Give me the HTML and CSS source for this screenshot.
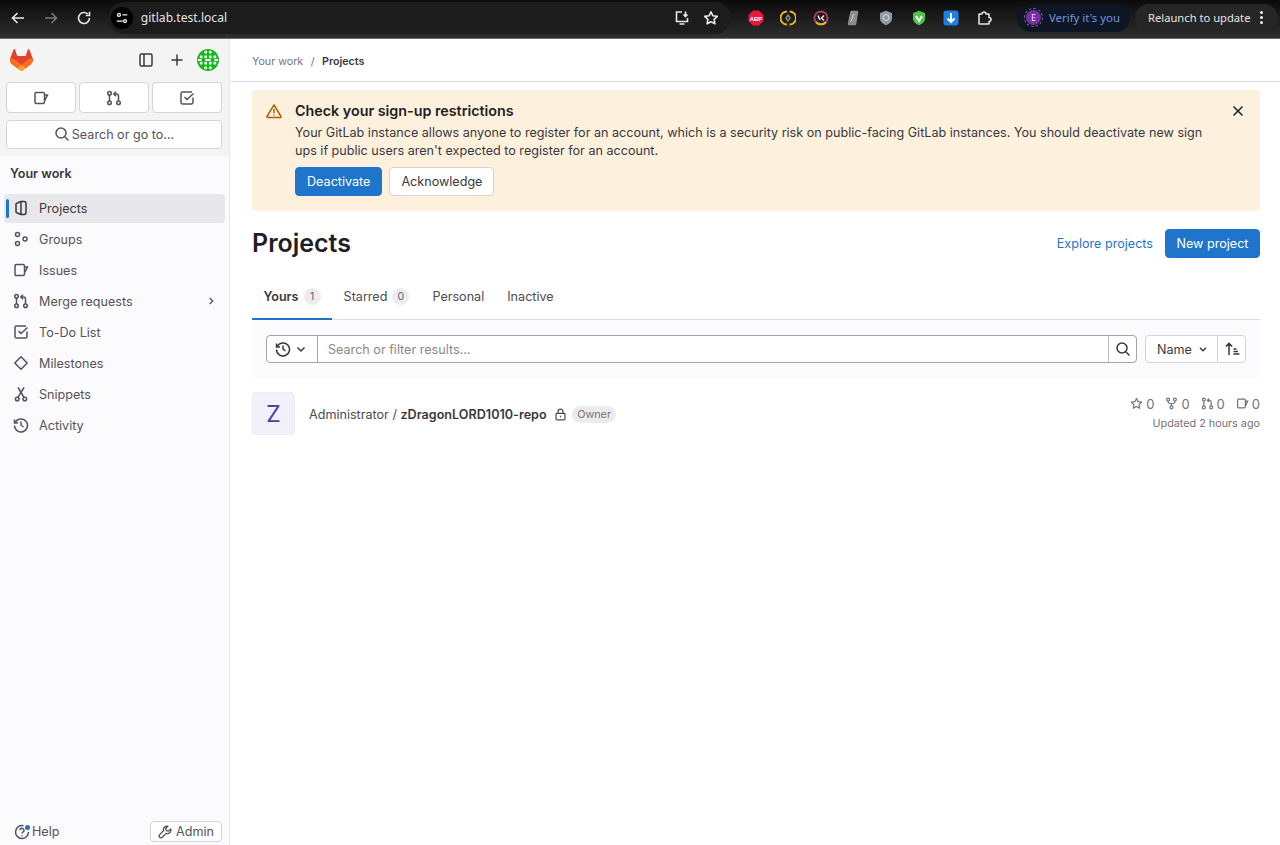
FILE: index.html
```html
<!DOCTYPE html>
<html lang="en">
<head>
  <meta charset="UTF-8" />
  <meta name="viewport" content="width=device-width, initial-scale=1.0"/>
  <title>Projects · GitLab</title>
  <link rel="stylesheet" href="styles.css">
</head>
<body>
<svg class="sprite" width="0" height="0">
  <defs>
    <symbol id="i-project" viewBox="0 0 16 16"><path d="M8 1.500 3.700 3.200a1 1 0 0 0-.7 1v7.600a1 1 0 0 0 .7 1L8 14.500h3a2 2 0 0 0 2-2v-9a2 2 0 0 0-2-2H8zM8 1.500v13"/></symbol>
    <symbol id="i-groups" viewBox="0 0 16 16"><circle cx="4.500" cy="3.500" r="2"/><circle cx="4.500" cy="12.500" r="2"/><circle cx="12" cy="8" r="2"/></symbol>
    <symbol id="i-issues" viewBox="0 0 16 16"><path d="M3.200 2.500H10A1.500 1.500 0 0 1 11.500 4v8a1.500 1.500 0 0 1-1.500 1.500H3.200A1.200 1.200 0 0 1 2 12.300V3.700A1.200 1.200 0 0 1 3.200 2.500zM11.500 5H14.500L11.500 11"/></symbol>
    <symbol id="i-merge" viewBox="0 0 16 16"><circle cx="3.500" cy="3.200" r="1.800"/><circle cx="3.500" cy="12.800" r="1.800"/><circle cx="12.500" cy="12.800" r="1.800"/><path d="M3.500 5v6M12.500 11V6a2 2 0 0 0-2-2H8M10 1.800 7.800 4 10 6.200"/></symbol>
    <symbol id="i-todo" viewBox="0 0 16 16"><path d="M14 7.500v5a1.500 1.500 0 0 1-1.500 1.500h-9A1.500 1.500 0 0 1 2 12.500v-9A1.500 1.500 0 0 1 3.500 2H13M5.500 7l2.500 2.500L14.500 3.500"/></symbol>
    <symbol id="i-milestone" viewBox="0 0 16 16"><path d="M8 1.800 14.200 8 8 14.200 1.800 8z" stroke-linejoin="round"/></symbol>
    <symbol id="i-snippet" viewBox="0 0 16 16"><circle cx="4.200" cy="13" r="1.800"/><circle cx="11.800" cy="13" r="1.800"/><path d="M5 11.400 11 1.500M11 11.400 5 1.500"/></symbol>
    <symbol id="i-history" viewBox="0 0 16 16"><path d="M2.200 5.500A6.500 6.500 0 1 1 1.500 8.500M1.500 2.500v3.500H5M8 4.500V8l2.500 2"/></symbol>
    <symbol id="i-search" viewBox="0 0 16 16"><circle cx="7" cy="7" r="5"/><path d="m10.800 10.800 3.700 3.700"/></symbol>
    <symbol id="i-chevron-down" viewBox="0 0 16 16"><path d="m4.500 6.500 3.500 3.500 3.500-3.500"/></symbol>
    <symbol id="i-chevron-right" viewBox="0 0 16 16"><path d="m6.500 4.500 3.500 3.500-3.500 3.500"/></symbol>
    <symbol id="i-sidebar" viewBox="0 0 16 16"><rect x="2" y="2" width="12" height="12" rx="1.500"/><path d="M6 2v12"/></symbol>
    <symbol id="i-plus" viewBox="0 0 16 16"><path d="M8 2.500v11M2.500 8h11"/></symbol>
    <symbol id="i-warning" viewBox="0 0 16 16"><path d="M8 1.800 1 13.500a.6.6 0 0 0 .5.9h13a.6.6 0 0 0 .5-.9zM8 6v4.200M8 11.600v1" stroke-linejoin="round"/></symbol>
    <symbol id="i-close" viewBox="0 0 16 16"><path d="m3.500 3.500 9 9M12.500 3.500l-9 9"/></symbol>
    <symbol id="i-sort" viewBox="0 0 16 16"><path d="M5 14V2.500M1.800 5.500 5 2.300l3.200 3.200M9.500 8h3M9.500 10.500h4.500M9.500 13h6"/></symbol>
    <symbol id="i-star" viewBox="0 0 16 16"><path d="m8 1.800 1.900 4 4.400.600-3.200 3 .8 4.400L8 11.700l-3.900 2.100.8-4.400-3.200-3 4.400-.600z" stroke-linejoin="round"/></symbol>
    <symbol id="i-fork" viewBox="0 0 16 16"><circle cx="3.800" cy="3.200" r="1.800"/><circle cx="12.200" cy="3.200" r="1.800"/><circle cx="8" cy="12.800" r="1.800"/><path d="M3.800 5v.5a2.500 2.500 0 0 0 2.500 2.500h3.400a2.500 2.500 0 0 0 2.500-2.500V5M8 8v3"/></symbol>
    <symbol id="i-lock" viewBox="0 0 16 16"><rect x="2.500" y="6.500" width="11" height="8" rx="1"/><path d="M5 6.500V4.500a3 3 0 0 1 6 0v2M8 9.500v2"/></symbol>
    <symbol id="i-wrench" viewBox="0 0 16 16"><path d="M14.500 4.500 11.800 7 9.300 6.500 8.800 4 11.300 1.500a4 4 0 0 0-5 5L1.800 11a2.200 2.200 0 0 0 3.100 3.100L9.400 9.600a4 4 0 0 0 5.100-5.100z" stroke-linejoin="round"/></symbol>
    <symbol id="i-help" viewBox="0 0 16 16"><path d="M9.500 1.700A6.500 6.500 0 1 0 14.500 8M6 6.200a2 2 0 1 1 3 1.800c-.6.400-1 .8-1 1.500M8 11.300v1"/></symbol>
    <symbol id="i-tanuki" viewBox="0 0 25 24">
      <path fill="#E24329" stroke="none" d="m24.507 9.500-.034-.09L21.082.562a.896.896 0 0 0-1.694.091l-2.290 7.010H7.825L5.535.653a.898.898 0 0 0-1.694-.090L.451 9.411.416 9.500a6.297 6.297 0 0 0 2.090 7.278l.012.010.030.022 5.160 3.867 2.560 1.935 1.554 1.176a1.051 1.051 0 0 0 1.268 0l1.555-1.176 2.560-1.935 5.197-3.890.014-.010A6.297 6.297 0 0 0 24.507 9.500Z"/>
      <path fill="#FC6D26" stroke="none" d="m24.507 9.500-.034-.09a11.440 11.440 0 0 0-4.560 2.051l-7.447 5.632 4.742 3.584 5.197-3.890.014-.010A6.297 6.297 0 0 0 24.507 9.500Z"/>
      <path fill="#FCA326" stroke="none" d="m7.707 20.677 2.560 1.935 1.555 1.176a1.051 1.051 0 0 0 1.268 0l1.555-1.176 2.560-1.935-4.743-3.584-4.755 3.584Z"/>
      <path fill="#FC6D26" stroke="none" d="M5.010 11.461a11.430 11.430 0 0 0-4.560-2.050L.416 9.500a6.297 6.297 0 0 0 2.090 7.278l.012.010.030.022 5.160 3.867 4.745-3.584-7.444-5.632Z"/>
    </symbol>
  </defs>
</svg>

<!-- browser chrome -->
<header class="chrome">
  <div class="chrome-nav">
    <svg class="chrome-icon" viewBox="0 0 16 16"><path d="M14 8H2.500M7.500 3 2.500 8l5 5"/></svg>
    <svg class="chrome-icon dim" viewBox="0 0 16 16"><path d="M2 8h11.500M8.500 3l5 5-5 5"/></svg>
    <svg class="chrome-icon" viewBox="0 0 16 16"><path d="M13.500 8A5.500 5.500 0 1 1 11.800 4M13.500 1.800V5.500H9.800"/></svg>
  </div>
  <div class="urlbar">
    <span class="site-info">
      <svg viewBox="0 0 16 16"><circle cx="4.500" cy="4.500" r="1.700"/><path d="M8.500 4.500H14M2 11.500h7"/><circle cx="11.500" cy="11.500" r="1.700"/></svg>
    </span>
    <span class="url">gitlab.test.local</span>
    <span class="url-actions">
      <svg class="chrome-icon" viewBox="0 0 16 16"><path d="M8 2H2.500v9.500h11V8M5.500 14h5M11.500 1.500v4.500M9.500 4.500l2 2 2-2"/></svg>
      <svg class="chrome-icon" viewBox="0 0 16 16"><use href="#i-star"/></svg>
    </span>
  </div>
  <div class="extensions">
    <svg viewBox="0 0 16 16"><path fill="#e8193c" d="M5 .5h6L15.500 5v6L11 15.500H5L.5 11V5z"/><text x="8" y="10.500" class="abp">ABP</text></svg>
    <svg viewBox="0 0 16 16" fill="none"><path stroke="#e9b020" stroke-width="2" d="M7 1.500a6.500 6.500 0 0 0 0 13M9.500 14.500a6.500 6.500 0 0 0 0-13"/><path stroke="#888" stroke-width="1.500" d="M8 5l2 3-2 3-2-3z"/></svg>
    <svg viewBox="0 0 16 16" fill="none"><circle cx="8" cy="8" r="6.500" stroke="#b23a6a" stroke-width="2"/><path stroke="#e8b030" stroke-width="2" d="M3 12a6.500 6.500 0 0 0 10 0"/><path stroke="#e8e8e8" stroke-width="1.500" d="M5 5.500 7 10M11 5.500 8.500 8l2.500 2.500"/></svg>
    <svg viewBox="0 0 16 16"><path fill="#8c8c8c" d="M6.500 2h5.500L10 14H4z" stroke="#8c8c8c" stroke-linejoin="round" stroke-width="2.500"/><path stroke="#e0e0e0" fill="none" d="M9.500 4.500c-3 0-1 3-2 4s-1 2-1.500 3"/></svg>
    <svg viewBox="0 0 16 16"><path fill="#8f98a3" d="M8 .8 14 3v5.500c0 3.200-2.800 5.500-6 6.700-3.200-1.200-6-3.500-6-6.700V3z"/><circle cx="8" cy="7.500" r="3" fill="none" stroke="#d8dde2"/></svg>
    <svg viewBox="0 0 16 16"><path fill="#4fc24a" d="M8 .8 14 3v5.500c0 3.200-2.800 5.500-6 6.700-3.200-1.200-6-3.500-6-6.700V3z"/><path fill="none" stroke="#fff" stroke-width="2" d="m5 6 3 5 3-5"/></svg>
    <svg viewBox="0 0 16 16"><rect x=".5" y=".5" width="15" height="15" rx="3" fill="#1c7fe8"/><path fill="none" stroke="#fff" stroke-width="2" d="M8 3v9M4.500 8.500 8 12l3.500-3.500"/></svg>
    <svg viewBox="0 0 16 16" fill="none"><path stroke="#e8e8e8" stroke-width="1.500" stroke-linejoin="round" d="M3 4h3a2 2 0 0 1 4 0h3v3.500a2 2 0 0 1 0 4V14H3z"/></svg>
  </div>
  <div class="verify">
    <span class="verify-badge">E</span>
    <span>Verify it's you</span>
  </div>
  <div class="relaunch">
    <span>Relaunch to update</span>
    <span class="dots"><i></i><i></i><i></i></span>
  </div>
</header>

<div class="app">
  <aside class="sidebar">
    <div class="user-bar">
      <div class="user-top">
        <svg class="tanuki"><use href="#i-tanuki"/></svg>
        <span class="user-actions">
          <svg class="icon"><use href="#i-sidebar"/></svg>
          <svg class="icon"><use href="#i-plus"/></svg>
          <svg class="avatar" viewBox="0 0 24 24">
            <circle cx="12" cy="12" r="12" fill="#17b51f"/>
            <path fill="#e8f7e8" d="M8 2h3v3H8zM13 2h3v3h-3zM8 7h3v3H8zM13 7h3v3h-3zM8 14h3v3H8zM13 14h3v3h-3zM8 19h3v3H8zM13 19h3v3h-3zM3 7h3v3H3zM18 7h3v3h-3zM3 14h3v3H3zM18 14h3v3h-3zM1 11h4v2H1zM19 11h4v2h-4zM9 11h6v2H9z"/>
          </svg>
        </span>
      </div>
      <div class="counters">
        <button class="btn"><svg class="icon"><use href="#i-issues"/></svg></button>
        <button class="btn"><svg class="icon"><use href="#i-merge"/></svg></button>
        <button class="btn"><svg class="icon"><use href="#i-todo"/></svg></button>
      </div>
      <button class="btn search-btn"><svg class="icon"><use href="#i-search"/></svg>Search or go to...</button>
    </div>

    <div class="nav-title">Your work</div>
    <nav class="nav">
      <a class="nav-item active"><svg class="icon"><use href="#i-project"/></svg>Projects</a>
      <a class="nav-item"><svg class="icon"><use href="#i-groups"/></svg>Groups</a>
      <a class="nav-item"><svg class="icon"><use href="#i-issues"/></svg>Issues</a>
      <a class="nav-item"><svg class="icon"><use href="#i-merge"/></svg>Merge requests<svg class="icon nav-chevron"><use href="#i-chevron-right"/></svg></a>
      <a class="nav-item"><svg class="icon"><use href="#i-todo"/></svg>To-Do List</a>
      <a class="nav-item"><svg class="icon"><use href="#i-milestone"/></svg>Milestones</a>
      <a class="nav-item"><svg class="icon"><use href="#i-snippet"/></svg>Snippets</a>
      <a class="nav-item"><svg class="icon"><use href="#i-history"/></svg>Activity</a>
    </nav>

    <div class="sidebar-foot">
      <span class="help"><svg class="icon"><use href="#i-help"/></svg><i class="help-dot"></i>Help</span>
      <button class="btn admin-btn"><svg class="icon"><use href="#i-wrench"/></svg>Admin</button>
    </div>
  </aside>

  <main class="content">
    <div class="breadcrumbs">
      <span>Your work</span><span class="sep">/</span><strong>Projects</strong>
    </div>

    <section class="alert">
      <svg class="icon alert-icon"><use href="#i-warning"/></svg>
      <div class="alert-body">
        <h2>Check your sign-up restrictions</h2>
        <p>Your GitLab instance allows anyone to register for an account, which is a security risk on public-facing GitLab instances. You should deactivate new sign ups if public users aren't expected to register for an account.</p>
        <div class="alert-actions">
          <button class="btn primary">Deactivate</button>
          <button class="btn">Acknowledge</button>
        </div>
      </div>
      <svg class="icon alert-close"><use href="#i-close"/></svg>
    </section>

    <div class="page-head">
      <h1>Projects</h1>
      <div class="page-actions">
        <a class="link">Explore projects</a>
        <button class="btn primary">New project</button>
      </div>
    </div>

    <div class="tabs">
      <a class="tab active">Yours <span class="count">1</span></a>
      <a class="tab">Starred <span class="count">0</span></a>
      <a class="tab">Personal</a>
      <a class="tab">Inactive</a>
    </div>

    <div class="filter-bar">
      <div class="filter">
        <span class="filter-history">
          <svg class="icon"><use href="#i-history"/></svg>
          <svg class="icon"><use href="#i-chevron-down"/></svg>
        </span>
        <span class="filter-input">Search or filter results...</span>
        <span class="filter-search"><svg class="icon"><use href="#i-search"/></svg></span>
      </div>
      <div class="sort">
        <span class="sort-name">Name <svg class="icon"><use href="#i-chevron-down"/></svg></span>
        <span class="sort-dir"><svg class="icon"><use href="#i-sort"/></svg></span>
      </div>
    </div>

    <div class="project">
      <div class="project-avatar">Z</div>
      <div class="project-name">
        <span>Administrator / <strong>zDragonLORD1010-repo</strong></span>
        <svg class="icon"><use href="#i-lock"/></svg>
        <span class="badge">Owner</span>
      </div>
      <div class="project-meta">
        <div class="stats">
          <span><svg class="icon"><use href="#i-star"/></svg>0</span>
          <span><svg class="icon"><use href="#i-fork"/></svg>0</span>
          <span><svg class="icon"><use href="#i-merge"/></svg>0</span>
          <span><svg class="icon"><use href="#i-issues"/></svg>0</span>
        </div>
        <div class="updated">Updated 2 hours ago</div>
      </div>
    </div>
  </main>
</div>
</body>
</html>
```

FILE: styles.css
```css
* {
  box-sizing: border-box;
}

body {
  margin: 0;
  height: 845px;
  overflow: hidden;
  font-family: Inter, 'Noto Sans', sans-serif;
  font-size: 12.6px;
  color: #3a383f;
  background: #fff;
  display: flex;
  flex-direction: column;
}

.sprite {
  position: absolute;
}

.icon {
  width: 16px;
  height: 16px;
  flex: none;
  fill: none;
  stroke: currentColor;
  stroke-width: 1.5;
}

/* browser chrome */
.chrome {
  height: 39px;
  flex: none;
  display: flex;
  align-items: center;
  padding: 0 2px 3px 10px;
  background: linear-gradient(to bottom, #0b0b0b, #2e2e2e);
  border-bottom: 1px solid #6a6a6a;
  color: #e4e4e4;
  font-family: 'Noto Sans', sans-serif;
}

.chrome-nav {
  display: flex;
  gap: 17px;
  width: 98px;
}

.chrome-icon {
  width: 16px;
  height: 16px;
  flex: none;
  fill: none;
  stroke: #e8e8e8;
  stroke-width: 1.6;
}

.chrome-icon.dim {
  stroke: #777;
}

.urlbar {
  width: 624px;
  height: 32px;
  display: flex;
  align-items: center;
  padding-left: 3px;
  border-radius: 16px;
  background: #1c1c1c;
}

.site-info {
  width: 22px;
  height: 22px;
  border-radius: 50%;
  background: #000;
  display: flex;
  align-items: center;
  justify-content: center;
}

.site-info svg {
  width: 14px;
  height: 14px;
  fill: none;
  stroke: #eee;
  stroke-width: 1.5;
}

.url {
  margin-left: 8px;
  font-size: 12.1px;
}

.url-actions {
  margin-left: auto;
  margin-right: 12px;
  display: flex;
  gap: 13px;
}

.extensions {
  display: flex;
  gap: 16.6px;
  margin-left: 17px;
  width: 270px;
  align-items: center;
}

.extensions svg {
  width: 16px;
  height: 16px;
  flex: none;
}

.abp {
  font: bold 6px 'Liberation Sans', sans-serif;
  fill: #fff;
  text-anchor: middle;
}

.verify {
  width: 113px;
  height: 28px;
  flex: none;
  border-radius: 14px;
  background: #0e1524;
  color: #6f95dc;
  font-size: 11.4px;
  display: flex;
  align-items: center;
  gap: 8px;
  padding-left: 9px;
}

.verify-badge {
  width: 15px;
  height: 15px;
  border-radius: 50%;
  background: #7a2fa8;
  color: #eee;
  font-size: 8px;
  display: flex;
  align-items: center;
  justify-content: center;
  outline: 1px dashed #777;
  outline-offset: 1px;
}

.relaunch {
  margin-left: 5px;
  width: 143px;
  height: 28px;
  flex: none;
  border-radius: 14px;
  background: #262626;
  font-size: 11.2px;
  display: flex;
  align-items: center;
  justify-content: space-between;
  padding: 0 15px 0 13px;
}

.dots {
  display: flex;
  flex-direction: column;
  gap: 2px;
}

.dots i {
  width: 3px;
  height: 3px;
  border-radius: 50%;
  background: #eee;
}

/* layout */
.app {
  flex: 1;
  min-height: 0;
  display: flex;
}

.sidebar {
  width: 230px;
  flex: none;
  display: flex;
  flex-direction: column;
  background: #fbfafd;
  border-right: 1px solid #e8e8ea;
}

.user-bar {
  height: 117px;
  padding: 8px 7px 0 6px;
  background: #f4f4f5;
}

.user-top {
  display: flex;
  align-items: center;
  justify-content: space-between;
  height: 26px;
  padding: 0 3px 0 4px;
  margin-bottom: 9px;
}

.tanuki {
  width: 23px;
  height: 22px;
}

.user-actions {
  display: flex;
  align-items: center;
  gap: 15px;
}

.avatar {
  width: 22px;
  height: 22px;
  margin-left: -3px;
}

.btn {
  font-family: inherit;
  font-size: 12.6px;
  color: #3a383f;
  background: #fff;
  border: 1px solid #d4d3d8;
  border-radius: 4px;
  height: 29px;
  padding: 0 11px;
  display: inline-flex;
  align-items: center;
  justify-content: center;
}

.btn.primary {
  background: #1f75cb;
  border-color: #1f75cb;
  color: #fff;
}

.counters {
  display: flex;
  gap: 3px;
  margin-bottom: 7px;
}

.counters .btn {
  width: 70px;
  height: 31px;
  color: #55535a;
}

.search-btn {
  width: 216px;
  height: 29px;
  gap: 2px;
  color: #55535a;
  padding-bottom: 1px;
}

.nav-title {
  margin: 9px 0 0 10px;
  font-weight: 600;
  line-height: 17px;
}

.nav {
  margin-top: 11.5px;
  display: flex;
  flex-direction: column;
  padding: 0 4px 0 4px;
}

.nav-item {
  position: relative;
  height: 29px;
  margin-bottom: 2px;
  display: flex;
  align-items: center;
  gap: 10px;
  padding-left: 9px;
  border-radius: 4px;
  color: #55535a;
}

.nav-item.active {
  background: #e8e8ea;
  color: #3a383f;
}

.nav-item.active::before {
  content: "";
  position: absolute;
  left: 2px;
  top: 5px;
  bottom: 5px;
  width: 3px;
  border-radius: 2px;
  background: #1f75cb;
}

.nav-item .nav-chevron {
  width: 14px;
  height: 14px;
  margin-left: auto;
  margin-right: 7px;
}

.sidebar-foot {
  margin-top: auto;
  display: flex;
  align-items: center;
  justify-content: space-between;
  padding: 0 7px 3px 14px;
  color: #55535a;
}

.help {
  position: relative;
  display: flex;
  align-items: center;
  gap: 2px;
}

.help-dot {
  position: absolute;
  left: 11px;
  top: 1px;
  width: 5px;
  height: 5px;
  border-radius: 50%;
  background: #1f75cb;
}

.admin-btn {
  width: 72px;
  height: 21px;
  gap: 4px;
  padding: 0;
  color: #55535a;
}

.admin-btn .icon {
  width: 14px;
  height: 14px;
}

/* main */
.content {
  flex: 1;
  min-width: 0;
  padding: 0 20px 0 22px;
}

.breadcrumbs {
  height: 43px;
  margin: 0 -20px 0 -22px;
  padding: 2px 0 0 22px;
  border-bottom: 1px solid #dcdcde;
  display: flex;
  align-items: center;
  font-size: 10.7px;
  color: #737278;
}

.breadcrumbs .sep {
  margin: 0 7.5px;
}

.breadcrumbs strong {
  color: #3a383f;
  font-weight: 600;
}

.alert {
  margin-top: 8px;
  height: 121px;
  background: #fdf1dd;
  border-radius: 4px;
  padding: 12px 14px;
  display: flex;
  align-items: flex-start;
}

.alert-icon {
  color: #ab6100;
  margin-top: 1px;
}

.alert-body {
  flex: 1;
  margin-left: 13px;
}

.alert-body h2 {
  margin: 0;
  font-size: 14.3px;
  font-weight: 600;
  line-height: 18px;
  color: #1f1e24;
}

.alert-body p {
  margin: 4px 0 7px;
  width: 916px;
  line-height: 18px;
}

.alert-actions {
  display: flex;
  gap: 7px;
}

.alert-close {
  margin: 1px 0 0 0;
  color: #1f1e24;
}

.page-head {
  display: flex;
  align-items: center;
  justify-content: space-between;
  margin-top: 15px;
  height: 33px;
}

.page-head h1 {
  margin: 0;
  font-size: 25px;
  font-weight: 600;
  color: #1f1e24;
}

.page-actions {
  display: flex;
  align-items: center;
  gap: 12px;
  padding-top: 1px;
}

.link {
  color: #1f75cb;
}

.page-actions .btn {
  width: 95px;
  padding: 0;
}

.tabs {
  display: flex;
  margin-top: 14px;
  height: 47px;
  border-bottom: 1px solid #dcdcde;
}

.tab {
  display: flex;
  align-items: center;
  gap: 5px;
  padding: 0 11.5px;
  height: 47px;
  color: #4c4b51;
}

.tab.active {
  font-weight: 600;
  color: #3a383f;
  border-bottom: 2px solid #1f75cb;
  padding-top: 2px;
}

.count {
  min-width: 17px;
  height: 17px;
  border-radius: 9px;
  background: #ececef;
  color: #626168;
  font-size: 10.5px;
  font-weight: 400;
  display: flex;
  align-items: center;
  justify-content: center;
}

.filter-bar {
  height: 58px;
  background: #fbfafd;
  padding: 15px 14px;
  display: flex;
  gap: 8px;
}

.filter {
  flex: 1;
  height: 28px;
  display: flex;
  background: #fff;
  border: 1px solid #a4a3a8;
  border-radius: 4px;
}

.filter-history {
  width: 51px;
  display: flex;
  align-items: center;
  justify-content: center;
  gap: 2px;
  border-right: 1px solid #a4a3a8;
}

.filter-input {
  flex: 1;
  padding-left: 10px;
  line-height: 27px;
  color: #89888d;
}

.filter-search {
  width: 28px;
  display: flex;
  align-items: center;
  justify-content: center;
  border-left: 1px solid #bfbfc3;
}

.sort {
  display: flex;
  height: 28px;
  background: #fff;
  border: 1px solid #d4d3d8;
  border-radius: 4px;
}

.sort-name {
  width: 72px;
  display: flex;
  align-items: center;
  gap: 4px;
  padding-left: 11px;
  border-right: 1px solid #d4d3d8;
}

.sort-name .icon {
  width: 14px;
  height: 14px;
}

.sort-dir {
  width: 27px;
  display: flex;
  align-items: center;
  justify-content: center;
}

.project {
  margin-top: 14px;
  display: flex;
  align-items: center;
}

.project-avatar {
  width: 43px;
  height: 43px;
  border-radius: 4px;
  background: #f1f0fb;
  border: 1px solid #ececf3;
  color: #4b3f9e;
  font-size: 23px;
  display: flex;
  align-items: center;
  justify-content: center;
}

.project-name {
  margin-left: 14px;
  padding-top: 1px;
  display: flex;
  align-items: center;
  gap: 7px;
  color: #4c4b51;
}

.project-name strong {
  font-weight: 600;
  color: #3a383f;
}

.project-name .icon {
  width: 13px;
  height: 13px;
}

.badge {
  height: 17px;
  padding: 0 5.5px;
  margin-left: -2px;
  border-radius: 9px;
  background: #ececef;
  color: #737278;
  font-size: 10.8px;
  line-height: 17px;
}

.project-meta {
  margin-left: auto;
  text-align: right;
  color: #737278;
}

.stats {
  display: flex;
  justify-content: flex-end;
  gap: 11px;
  line-height: 20px;
  font-size: 13px;
}

.stats span {
  display: flex;
  align-items: center;
  gap: 3px;
}

.stats .icon {
  width: 13px;
  height: 13px;
}

.updated {
  font-size: 10.8px;
  line-height: 20px;
}
```
